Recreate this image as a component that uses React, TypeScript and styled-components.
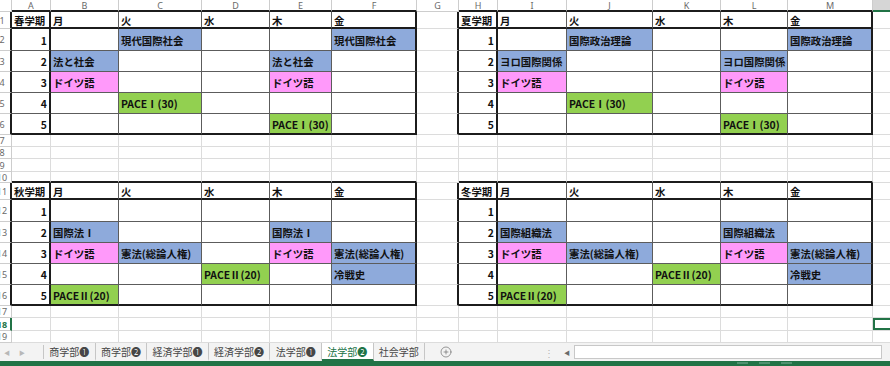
import styled, { createGlobalStyle } from "styled-components";
import { CirclePlus } from "lucide-react";

type Fill = "blue" | "pink" | "green";
type Edge = "thick" | "thin" | "grid" | "head";

const FILLS: Record<Fill, string> = {
  blue: "#8eaadb",
  pink: "#ff99fa",
  green: "#92d050",
};

const EDGES: Record<Edge, string> = {
  thick: "2px solid #1c1c1c",
  thin: "1px solid #5c5c5c",
  grid: "1px solid #dcdcdc",
  head: "1px solid #cdcdcd",
};

const colWidths = [12, 39, 68, 83, 68, 62, 85, 42, 39, 69, 86, 68, 67, 85, 60];
const rowHeights = [12, 17, 22, 21, 21, 21, 21, 12, 12, 13, 11, 17, 22, 21, 21, 21, 21, 12, 13, 12];
const letters = ["", "A", "B", "C", "D", "E", "F", "G", "H", "I", "J", "K", "L", "M", ""];

// "text|b" => blue fill, |p pink, |g green
const spring = [
  ["春学期", "月", "火", "水", "木", "金"],
  ["1", "", "現代国際社会|b", "", "", "現代国際社会|b"],
  ["2", "法と社会|b", "", "", "法と社会|b", ""],
  ["3", "ドイツ語|p", "", "", "ドイツ語|p", ""],
  ["4", "", "PACEⅠ(30)|g", "", "", ""],
  ["5", "", "", "", "PACEⅠ(30)|g", ""],
];
const summer = [
  ["夏学期", "月", "火", "水", "木", "金"],
  ["1", "", "国際政治理論|b", "", "", "国際政治理論|b"],
  ["2", "ヨロ国際関係|b", "", "", "ヨロ国際関係|b", ""],
  ["3", "ドイツ語|p", "", "", "ドイツ語|p", ""],
  ["4", "", "PACEⅠ(30)|g", "", "", ""],
  ["5", "", "", "", "PACEⅠ(30)|g", ""],
];
const autumn = [
  ["秋学期", "月", "火", "水", "木", "金"],
  ["1", "", "", "", "", ""],
  ["2", "国際法Ⅰ|b", "", "", "国際法Ⅰ|b", ""],
  ["3", "ドイツ語|p", "憲法(総論人権)|b", "", "ドイツ語|p", "憲法(総論人権)|b"],
  ["4", "", "", "PACEⅡ(20)|g", "", "冷戦史|b"],
  ["5", "PACEⅡ(20)|g", "", "", "", ""],
];
const winter = [
  ["冬学期", "月", "火", "水", "木", "金"],
  ["1", "", "", "", "", ""],
  ["2", "国際組織法|b", "", "", "国際組織法|b", ""],
  ["3", "ドイツ語|p", "憲法(総論人権)|b", "", "ドイツ語|p", "憲法(総論人権)|b"],
  ["4", "", "", "PACEⅡ(20)|g", "", "冷戦史|b"],
  ["5", "PACEⅡ(20)|g", "", "", "", ""],
];

const tables = [
  { r0: 1, r1: 6, c0: 1, c1: 6, data: spring },
  { r0: 1, r1: 6, c0: 8, c1: 13, data: summer },
  { r0: 11, r1: 16, c0: 1, c1: 6, data: autumn },
  { r0: 11, r1: 16, c0: 8, c1: 13, data: winter },
];

const tableAt = (r: number, c: number) =>
  tables.find((t) => r >= t.r0 && r <= t.r1 && c >= t.c0 && c <= t.c1);

const vEdge = (r: number, c: number): Edge => {
  const a = tableAt(r, c);
  const b = tableAt(r, c + 1);
  if (a && b && a === b) return c === a.c0 ? "thick" : "thin";
  if (a || b) return "thick";
  return r === 0 || c === 0 ? "head" : "grid";
};

const hEdge = (r: number, c: number): Edge => {
  const a = tableAt(r, c);
  const b = tableAt(r + 1, c);
  if (a && b && a === b) return r === a.r0 ? "thick" : "thin";
  if (a || b) return "thick";
  return r === 0 || c === 0 ? "head" : "grid";
};

const fillOf = (code?: string): Fill | undefined =>
  code === "b" ? "blue" : code === "p" ? "pink" : code === "g" ? "green" : undefined;

const SEL_ROW = 18;
const SEL_COL = 14;

const sheetTabs = ["商学部❶", "商学部❷", "経済学部❶", "経済学部❷", "法学部❶", "法学部❷", "社会学部"];

const App = () => {
  const cells = [];
  for (let r = 0; r < rowHeights.length; r++) {
    for (let c = 0; c < colWidths.length; c++) {
      const key = `${r}-${c}`;
      if (r === 0) {
        cells.push(
          <ColHead key={key} $right={EDGES[vEdge(r, c)]} $bottom={EDGES[hEdge(r, c)]} $sel={c === SEL_COL}>
            {letters[c]}
          </ColHead>
        );
        continue;
      }
      if (c === 0) {
        cells.push(
          <RowHead key={key} $right={EDGES[vEdge(r, c)]} $bottom={EDGES[hEdge(r, c)]} $sel={r === SEL_ROW}>
            <RowNum>{r}</RowNum>
          </RowHead>
        );
        continue;
      }
      const t = tableAt(r, c);
      let text = "";
      let fill: Fill | undefined;
      if (t) {
        const [txt, code] = t.data[r - t.r0][c - t.c0].split("|");
        text = txt;
        fill = fillOf(code);
      }
      const isNum = !!t && c === t.c0 && r > t.r0;
      cells.push(
        <Cell
          key={key}
          $right={EDGES[vEdge(r, c)]}
          $bottom={EDGES[hEdge(r, c)]}
          $fill={fill ? FILLS[fill] : undefined}
          $num={isNum}
          $top={!!t && r === t.r0}
          $sel={r === SEL_ROW && c === SEL_COL}
        >
          {text}
        </Cell>
      );
    }
  }

  return (
    <>
      <GlobalStyle />
      <Window>
        <Sheet>{cells}</Sheet>
        <TabBar>
          <Nav>
            <NavArrow>◀</NavArrow>
            <NavArrow>▶</NavArrow>
          </Nav>
          {sheetTabs.map((name) => (
            <Tab key={name} $active={name === "法学部❷"}>
              {name}
            </Tab>
          ))}
          <AddSheet>
            <CirclePlus size={12} strokeWidth={1.4} />
          </AddSheet>
          <Spacer />
          <Splitter>⋮</Splitter>
          <ScrollArrow>◀</ScrollArrow>
          <Track />
        </TabBar>
        <StatusBar>
          <ViewBtn />
          <ViewBtn />
          <ViewBtn />
        </StatusBar>
      </Window>
    </>
  );
};

const GlobalStyle = createGlobalStyle`
  html, body {
    margin: 0;
    padding: 0;
    background: #ffffff;
    overflow: hidden;
  }
  body {
    font-family: "Noto Sans CJK JP", "Noto Sans", sans-serif;
  }
`;

const Window = styled.div`
  width: 890px;
  height: 366px;
  overflow: hidden;
  display: flex;
  flex-direction: column;
`;

const Sheet = styled.div`
  display: grid;
  grid-template-columns: ${colWidths.map((w) => `${w}px`).join(" ")};
  grid-template-rows: ${rowHeights.map((h) => `${h}px`).join(" ")};
  width: 890px;
  overflow: hidden;
`;

const ColHead = styled.div<{ $right: string; $bottom: string; $sel: boolean }>`
  box-sizing: border-box;
  display: flex;
  align-items: center;
  justify-content: center;
  border-right: ${(p) => p.$right};
  border-bottom: ${(p) => (p.$sel ? "2px solid #217346" : p.$bottom)};
  background: ${(p) => (p.$sel ? "#d6d6d6" : "#ffffff")};
  font-family: "Noto Sans", "Liberation Sans", sans-serif;
  font-size: 9px;
  color: #6a6a6a;
  overflow: hidden;
`;

const RowHead = styled.div<{ $right: string; $bottom: string; $sel: boolean }>`
  box-sizing: border-box;
  display: flex;
  align-items: center;
  border-right: ${(p) => (p.$sel ? "2px solid #217346" : p.$right)};
  border-bottom: ${(p) => p.$bottom};
  font-family: "Noto Sans", "Liberation Sans", sans-serif;
  font-size: 9px;
  color: ${(p) => (p.$sel ? "#217346" : "#6a6a6a")};
  font-weight: ${(p) => (p.$sel ? 700 : 400)};
  overflow: hidden;
`;

const RowNum = styled.span`
  flex: 0 0 20px;
  margin-left: -8px;
  text-align: center;
`;

const Cell = styled.div<{
  $right: string;
  $bottom: string;
  $fill?: string;
  $num: boolean;
  $top: boolean;
  $sel: boolean;
}>`
  box-sizing: border-box;
  display: flex;
  align-items: ${(p) => (p.$top ? "flex-end" : "center")};
  justify-content: ${(p) => (p.$num ? "flex-end" : "flex-start")};
  padding: ${(p) => (p.$top ? "0 2px 0 2px" : "1px 2px 0 2px")};
  border-right: ${(p) => p.$right};
  border-bottom: ${(p) => p.$bottom};
  background: ${(p) => p.$fill ?? "#ffffff"};
  box-shadow: ${(p) => (p.$sel ? "inset 0 0 0 2px #217346" : "none")};
  font-size: 10.4px;
  font-weight: 700;
  line-height: 13px;
  color: #111111;
  white-space: nowrap;
  overflow: hidden;
`;

const TabBar = styled.div`
  display: flex;
  align-items: stretch;
  height: 18px;
  background: #f3f3f3;
  font-size: 10px;
`;

const Nav = styled.div`
  width: 44px;
  display: flex;
  align-items: center;
  gap: 9px;
  padding-left: 4px;
  box-sizing: border-box;
  border-right: 1px solid #c6c6c6;
  margin: 2px 0;
`;

const NavArrow = styled.span`
  font-size: 6px;
  color: #b8b8b8;
`;

const Tab = styled.div<{ $active: boolean }>`
  display: flex;
  align-items: center;
  padding: 0 5.3px;
  box-sizing: border-box;
  color: ${(p) => (p.$active ? "#217346" : "#474747")};
  background: ${(p) => (p.$active ? "#ffffff" : "transparent")};
  border-bottom: 2px solid ${(p) => (p.$active ? "#217346" : "transparent")};
  border-right: 1px solid #c6c6c6;
  white-space: nowrap;
`;

const AddSheet = styled.div`
  display: flex;
  align-items: center;
  margin-left: 15px;
  color: #6e6e6e;
`;

const Spacer = styled.div`
  flex: 1;
`;

const Splitter = styled.div`
  display: flex;
  align-items: center;
  color: #b5b5b5;
  font-size: 10px;
  margin-right: 10px;
`;

const ScrollArrow = styled.div`
  display: flex;
  align-items: center;
  font-size: 6px;
  color: #6a6a6a;
  margin-right: 4px;
`;

const Track = styled.div`
  width: 308px;
  margin: 2px 8px 2px 0;
  background: #ffffff;
  border: 1px solid #c8c8c8;
  box-sizing: border-box;
`;

const StatusBar = styled.div`
  flex: 1;
  background: #217346;
  display: flex;
  gap: 11px;
  padding-left: 737px;
`;

const ViewBtn = styled.div`
  width: 11px;
  height: 2px;
  margin-top: 1px;
  background: #4f9270;
`;

export default App;
